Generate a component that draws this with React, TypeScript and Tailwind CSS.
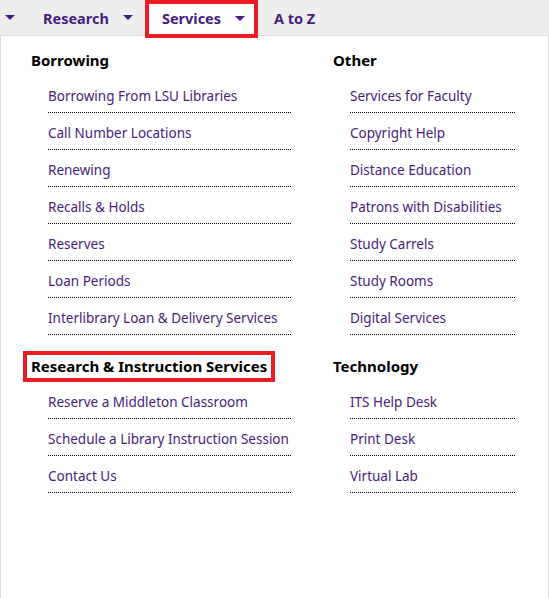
import React from "react";

const PURPLE = "text-[#461d7c]";

function Caret() {
  return (
    <svg width="10" height="5" viewBox="0 0 10 5" className="shrink-0 fill-[#461d7c]">
      <polygon points="0,0 10,0 5,5" />
    </svg>
  );
}

type Section = { title: string; links: string[]; highlight?: boolean };

const left: Section[] = [
  {
    title: "Borrowing",
    links: [
      "Borrowing From LSU Libraries",
      "Call Number Locations",
      "Renewing",
      "Recalls & Holds",
      "Reserves",
      "Loan Periods",
      "Interlibrary Loan & Delivery Services",
    ],
  },
  {
    title: "Research & Instruction Services",
    highlight: true,
    links: ["Reserve a Middleton Classroom", "Schedule a Library Instruction Session", "Contact Us"],
  },
];

const right: Section[] = [
  {
    title: "Other",
    links: [
      "Services for Faculty",
      "Copyright Help",
      "Distance Education",
      "Patrons with Disabilities",
      "Study Carrels",
      "Study Rooms",
      "Digital Services",
    ],
  },
  {
    title: "Technology",
    links: ["ITS Help Desk", "Print Desk", "Virtual Lab"],
  },
];

function Block({ s, listClass }: { s: Section; listClass: string }) {
  return (
    <div className="mb-[21px]">
      <h3 className="relative text-[15px] leading-[20px] font-bold text-black">
        {s.highlight && (
          <span className="absolute left-[-8px] top-[-5px] w-[252px] h-[31px] border-[4px] border-[#ed1c24]" />
        )}
        <span className="relative">{s.title}</span>
      </h3>
      <ul className={`mt-[6px] ${listClass}`}>
        {s.links.map((l) => (
          <li
            key={l}
            className={`pt-[10px] pb-[6px] leading-[20px] text-[13.5px] border-b border-dotted border-black ${PURPLE}`}
          >
            {l}
          </li>
        ))}
      </ul>
    </div>
  );
}

export default function App() {
  return (
    <div className="w-[549px] h-[598px] overflow-hidden bg-white font-['Noto_Sans',sans-serif]">
      <nav className="relative z-10 h-9 bg-[#eeeeee] border-b border-[#dddddd] flex items-center font-bold text-[14.5px] text-[#461d7c]">
        <span className="ml-[5px]"><Caret /></span>
        <span className="ml-[28px] pt-[2px]">Research</span>
        <span className="ml-[14px]"><Caret /></span>
        <div className="relative ml-[12px] self-start h-[37px] w-[113px] bg-white flex items-center pl-[17px]">
          <span className="absolute left-0 top-0 w-[113px] h-[38px] border-[4px] border-[#ed1c24]" />
          <span className="relative pt-[1px]">Services</span>
          <span className="relative ml-[14px]"><Caret /></span>
        </div>
        <span className="ml-[16px] pt-[2px]">A to Z</span>
      </nav>
      <div className="h-[562px] border-x border-[#dddddd] pt-[14px] pl-[30px] grid grid-cols-[302px_1fr]">
        <div>
          {left.map((s) => (
            <Block key={s.title} s={s} listClass="ml-[12px] w-[248px] pl-[5px]" />
          ))}
        </div>
        <div>
          {right.map((s) => (
            <Block key={s.title} s={s} listClass="ml-[14px] w-[168px] pl-[3px]" />
          ))}
        </div>
      </div>
    </div>
  );
}
